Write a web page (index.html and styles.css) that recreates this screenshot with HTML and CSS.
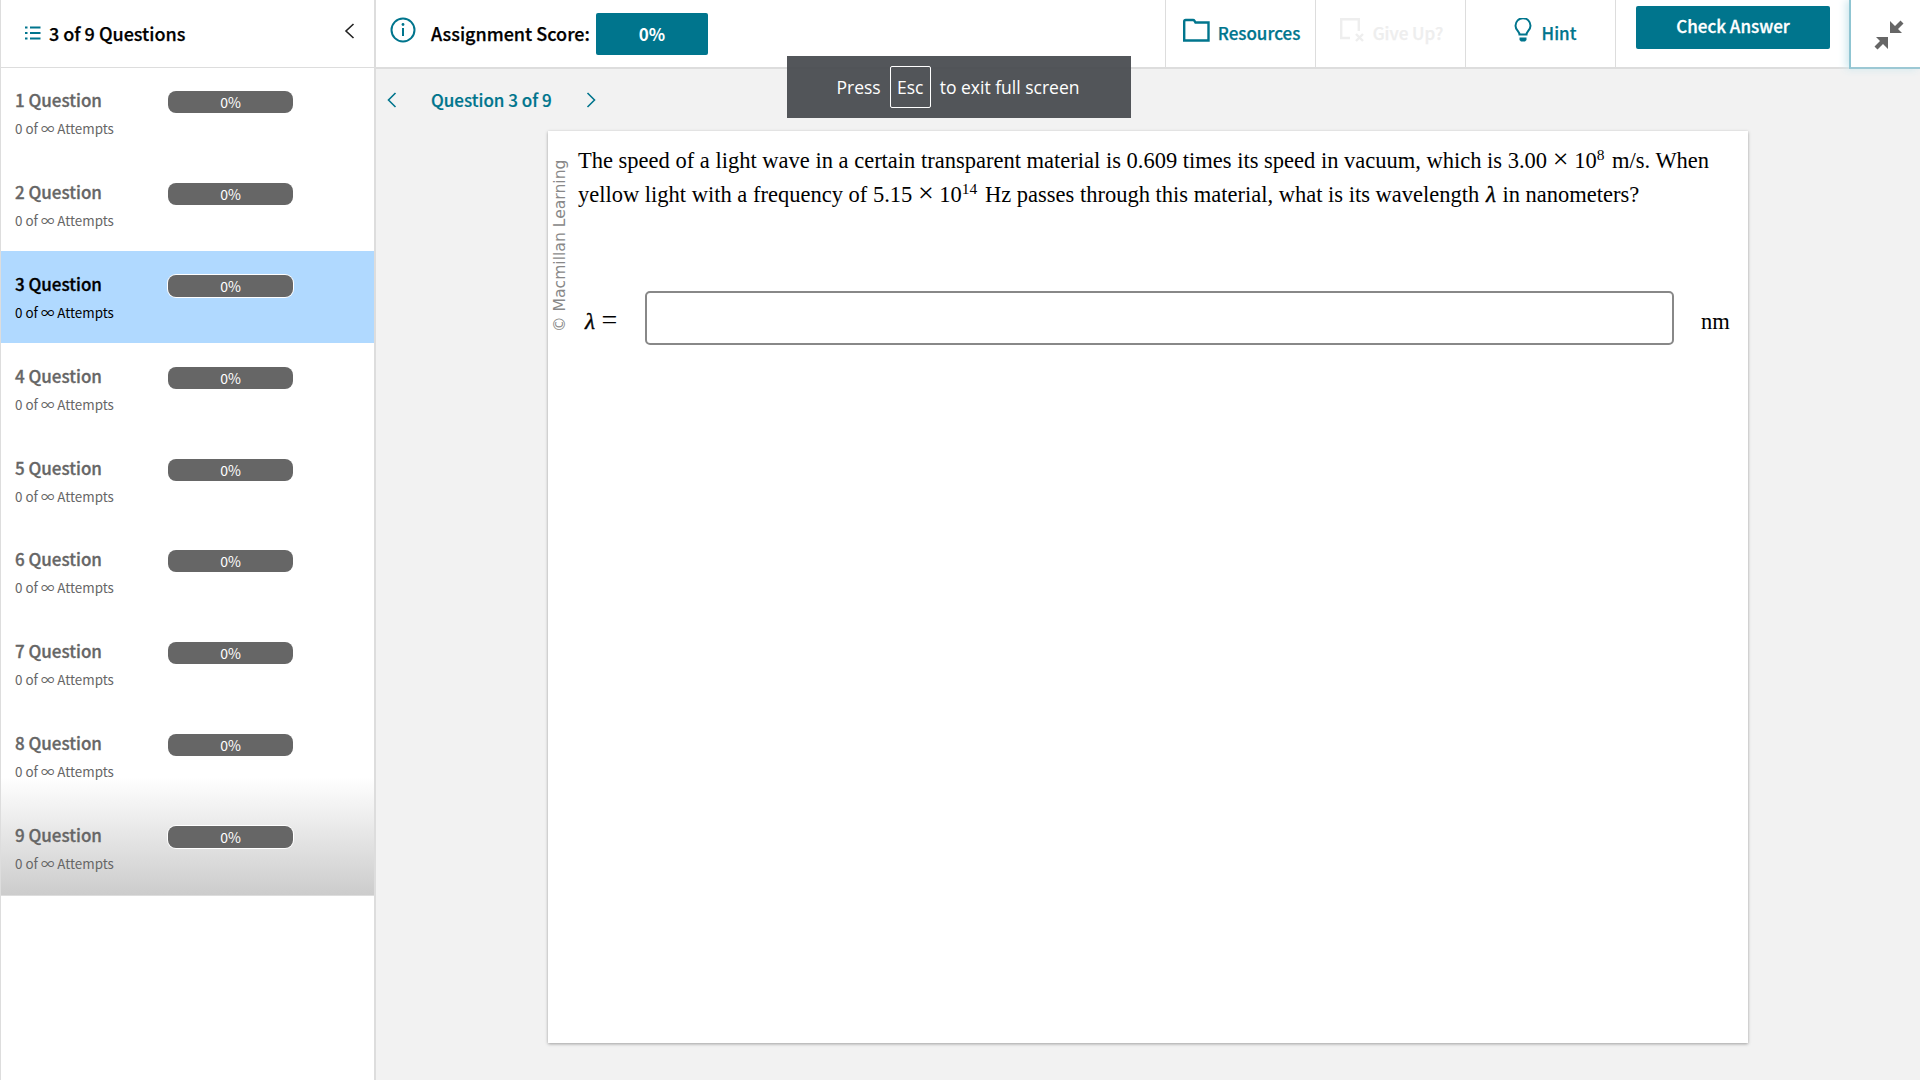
FILE: index.html
```html
<!DOCTYPE html>
<html lang="en">
<head>
<meta charset="utf-8">
<title>Question 3 of 9</title>
<link rel="stylesheet" href="styles.css">
</head>
<body>
<div class="app">
  <aside class="sidebar">
    <div class="side-head">
      <div class="side-title">
        <svg class="list-icon" width="16" height="14" viewBox="0 0 16 14"><path d="M0 1.500h2.500M5 1.500h10.500M0 7h2.500M5 7h10.500M0 12.500h2.500M5 12.500h10.500" stroke="#00758d" stroke-width="2" fill="none"/></svg>
        <span>3 of 9 Questions</span>
      </div>
      <svg class="collapse" width="12" height="18" viewBox="0 0 12 18"><path d="M9.500 2 2 9l7.500 7" stroke="#222" stroke-width="1.600" fill="none"/></svg>
    </div>
    <ul class="q-list">
      <li class="q-row"><div class="q-text"><div class="q-name">1 Question</div><div class="q-att">0 of ∞ Attempts</div></div><div class="pill">0%</div></li>
      <li class="q-row"><div class="q-text"><div class="q-name">2 Question</div><div class="q-att">0 of ∞ Attempts</div></div><div class="pill">0%</div></li>
      <li class="q-row current"><div class="q-text"><div class="q-name">3 Question</div><div class="q-att">0 of ∞ Attempts</div></div><div class="pill ring">0%</div></li>
      <li class="q-row"><div class="q-text"><div class="q-name">4 Question</div><div class="q-att">0 of ∞ Attempts</div></div><div class="pill">0%</div></li>
      <li class="q-row"><div class="q-text"><div class="q-name">5 Question</div><div class="q-att">0 of ∞ Attempts</div></div><div class="pill">0%</div></li>
      <li class="q-row"><div class="q-text"><div class="q-name">6 Question</div><div class="q-att">0 of ∞ Attempts</div></div><div class="pill">0%</div></li>
      <li class="q-row"><div class="q-text"><div class="q-name">7 Question</div><div class="q-att">0 of ∞ Attempts</div></div><div class="pill">0%</div></li>
      <li class="q-row"><div class="q-text"><div class="q-name">8 Question</div><div class="q-att">0 of ∞ Attempts</div></div><div class="pill">0%</div></li>
      <li class="q-row"><div class="q-text"><div class="q-name">9 Question</div><div class="q-att">0 of ∞ Attempts</div></div><div class="pill ring">0%</div></li>
    </ul>
  </aside>
  <main class="main">
    <header class="topbar">
      <div class="score">
        <svg width="26" height="26" viewBox="0 0 26 26"><circle cx="13" cy="13" r="11.500" fill="none" stroke="#00758d" stroke-width="2"/><path d="M13 11v8" stroke="#00758d" stroke-width="2"/><circle cx="13" cy="7.500" r="1.400" fill="#00758d"/></svg>
        <span class="score-label">Assignment Score:</span>
        <span class="score-box">0%</span>
      </div>
      <div class="tools">
        <div class="tool tool-res">
          <svg width="28" height="24" viewBox="0 0 28 24"><path d="M1.200 22.500V3.500q0-1.500 1.500-1.500h7.300q1 0 1.500.8l1 1.700h13v18Z" fill="none" stroke="#00758d" stroke-width="2.400"/></svg>
          <span>Resources</span>
        </div>
        <div class="tool tool-give">
          <svg width="24" height="24" viewBox="0 0 24 24"><path d="M10 20H1.200V1.200h17.600V13" fill="none" stroke="#eee" stroke-width="2.400"/><path d="m16 16 7 7m0-7-7 7" stroke="#eee" stroke-width="2.400"/></svg>
          <span>Give Up?</span>
        </div>
        <div class="tool tool-hint">
          <svg width="18" height="24" viewBox="0 0 18 24"><path d="M5.500 16.500c0-3-4-4.500-4-8.800a7.500 7.500 0 0 1 15 0c0 4.300-4 5.800-4 8.800Z" fill="none" stroke="#00758d" stroke-width="2"/><path d="M5.500 19.500h7V22l-1.500 1.500H7L5.500 22Z" fill="#00758d"/></svg>
          <span>Hint</span>
        </div>
        <div class="check-wrap"><button class="check">Check Answer</button></div>
        <div class="exit-fs">
          <svg width="30" height="30" viewBox="0 0 30 30"><path d="M16 1V13H28L24 9l5.500-5.500-3-3L21 6ZM14 29V17H2l4 4-5.500 5.500 3 3L9 24Z" fill="#666"/></svg>
        </div>
      </div>
    </header>
    <nav class="q-nav">
      <svg width="10" height="16" viewBox="0 0 10 16"><path d="M8.500 1 1.500 8l7 7" stroke="#00758d" stroke-width="1.600" fill="none"/></svg>
      <span class="q-nav-text">Question 3 of 9</span>
      <svg width="10" height="16" viewBox="0 0 10 16"><path d="m1.500 1 7 7-7 7" stroke="#00758d" stroke-width="1.600" fill="none"/></svg>
    </nav>
    <section class="card">
      <div class="copyright">© Macmillan Learning</div>
      <div class="q-body">
        <p class="prompt">The speed of a light wave in a certain transparent material is 0.609 times its speed in vacuum, which is 3.00 <span class="op">×</span> 10<sup>8</sup> m/s. When yellow light with a frequency of 5.15 <span class="op">×</span> 10<sup>14</sup> Hz passes through this material, what is its wavelength <i class="lam">λ</i> in nanometers?</p>
        <div class="answer">
          <span class="lhs"><i class="lam">λ</i> <span class="op">=</span></span>
          <div class="input"></div>
          <span class="unit">nm</span>
        </div>
      </div>
    </section>
  </main>
</div>
<div class="fs-banner">
  <span>Press</span><span class="esc">Esc</span><span>to exit full screen</span>
</div>
</body>
</html>
```
FILE: styles.css
```css
* { box-sizing: border-box; }
html, body { margin: 0; height: 100%; }
body {
  background: #f2f2f2;
  font-family: "Noto Sans CJK SC", "Noto Sans", sans-serif;
  color: #000;
  overflow: hidden;
}
.app { display: grid; grid-template-columns: 376px 1fr; height: 1080px; }

.sidebar { background: #fff; border-left: 1px solid #ddd; border-right: 2px solid #ddd; display: flex; flex-direction: column; }
.side-head { height: 67.500px; border-bottom: 1px solid #ddd; display: flex; align-items: center; justify-content: space-between; padding: 0 18px 1px 24px; flex: none; }
.side-title { display: flex; align-items: center; gap: 8px; font-size: 18px; font-weight: 500; line-height: 24px; -webkit-text-stroke: .25px currentColor; }
.collapse { margin-top: -3px; }
.q-list {
  list-style: none; margin: 0; padding: 0; height: 828.500px; flex: none;
  background: linear-gradient(to bottom, #fff calc(100% - 118px), #ccc 100%);
  border-bottom: 1px solid #ddd;
}
.q-row { height: 91.875px; display: flex; align-items: flex-start; padding: 23.500px 0 0 14px; color: #666; }
.q-row.current { background: #b0d9ff; color: #000; }
.q-text { width: 153px; margin-top: -3px; }
.q-name { font-size: 17px; font-weight: 500; line-height: 24px; -webkit-text-stroke: .3px currentColor; }
.q-att { font-size: 13.400px; line-height: 20px; margin-top: 6px; }
.pill { width: 125px; height: 22px; border-radius: 8px; background: #666; color: #fff; font-size: 14px; line-height: 22px; text-align: center; }
.pill.ring { box-shadow: 0 0 0 1px #fff; }

.main { display: flex; flex-direction: column; min-width: 0; }
.topbar { height: 69px; background: #fff; border-bottom: 2px solid #ddd; display: flex; justify-content: space-between; flex: none; }
.score { display: flex; align-items: center; padding-left: 14px; }
.score > svg { margin-top: -8px; }
.score-label { font-size: 18px; font-weight: 500; line-height: 24px; margin: -2px 0 0 15px; -webkit-text-stroke: .25px currentColor; }
.score-box { width: 112px; height: 42px; margin-left: 6px; background: #00758d; border-radius: 2px; color: #fff; font-size: 17px; font-weight: 700; line-height: 41px; text-align: center; }
.tools { display: flex; align-items: stretch; }
.tool { display: flex; align-items: center; justify-content: center; gap: 7px; width: 150px; border-left: 1px solid #ddd; color: #00758d; font-size: 17px; font-weight: 500; line-height: 24px; padding: 0 0 2px 2px; -webkit-text-stroke: .25px currentColor; }
.tool svg { margin-top: -6px; }
.tool-give { color: #eee; gap: 9px; }
.tool-hint { gap: 10px; padding-left: 9px; }
.check-wrap { width: 234px; border-left: 1px solid #ddd; padding: 6px 0 0 20px; }
.check { width: 194px; height: 43px; border: 0; border-radius: 2px; background: #00758d; color: #fff; font: 500 17px/24px "Noto Sans CJK SC", sans-serif; padding: 0 0 4px; -webkit-text-stroke: .3px currentColor; }
.exit-fs { width: 71px; margin-bottom: -2px; background: #fff; border-left: 2px solid #8fc5d2; border-bottom: 2px solid #9cc8d4; box-shadow: -3px 0 8px #cfe8ee; display: flex; align-items: center; justify-content: center; padding: 3px 0 0 6px; }

.q-nav { display: flex; align-items: center; height: 61px; padding-left: 11px; color: #00758d; flex: none; }
.q-nav-text { font-size: 17px; font-weight: 500; line-height: 24px; margin: 0 34px; -webkit-text-stroke: .2px currentColor; }

.card { width: 1200px; height: 912px; margin-left: 172px; margin-top: 1px; background: #fff; box-shadow: 0 1px 3px rgba(0,0,0,.35); display: flex; padding: 13px 0 0 3px; }
.copyright { writing-mode: vertical-rl; text-orientation: sideways; transform: rotate(180deg); height: 176px; margin-top: 12px; font-family: "DejaVu Sans", sans-serif; font-size: 15.600px; line-height: 18px; color: #888; white-space: nowrap; text-align: left; flex: none; }
.q-body { flex: 1; font-family: "Liberation Serif", serif; font-size: 22.500px; color: #000; padding-left: 9px; }
.prompt { margin: 0; line-height: 34px; width: 1165px; }
.prompt sup { font-size: 15.500px; line-height: 0; padding-right: 2px; }
.op { font-size: 28px; line-height: 0; }
.lam { font-size: 23px; font-weight: 400; -webkit-text-stroke: .4px currentColor; padding: 0 1px; }
.answer { display: flex; align-items: center; margin-top: 79px; }
.lhs { width: 67px; padding-left: 6px; margin-top: 8px; white-space: nowrap; }
.input { width: 1029px; height: 54px; background: #fff; border: 2px solid #888; border-radius: 5px; flex: none; }
.unit { margin-left: 27px; margin-top: 8px; }

.fs-banner { position: absolute; left: 787px; top: 56px; width: 344px; height: 62px; padding-right: 2px; background: rgba(70,73,78,.93); color: #fff; display: flex; align-items: center; justify-content: center; gap: 9px; font-family: "Open Sans", sans-serif; font-size: 17.500px; line-height: 24px; }
.esc { width: 41px; height: 42px; border: 1px solid #fff; border-radius: 2px; display: flex; align-items: center; justify-content: center; }
```
